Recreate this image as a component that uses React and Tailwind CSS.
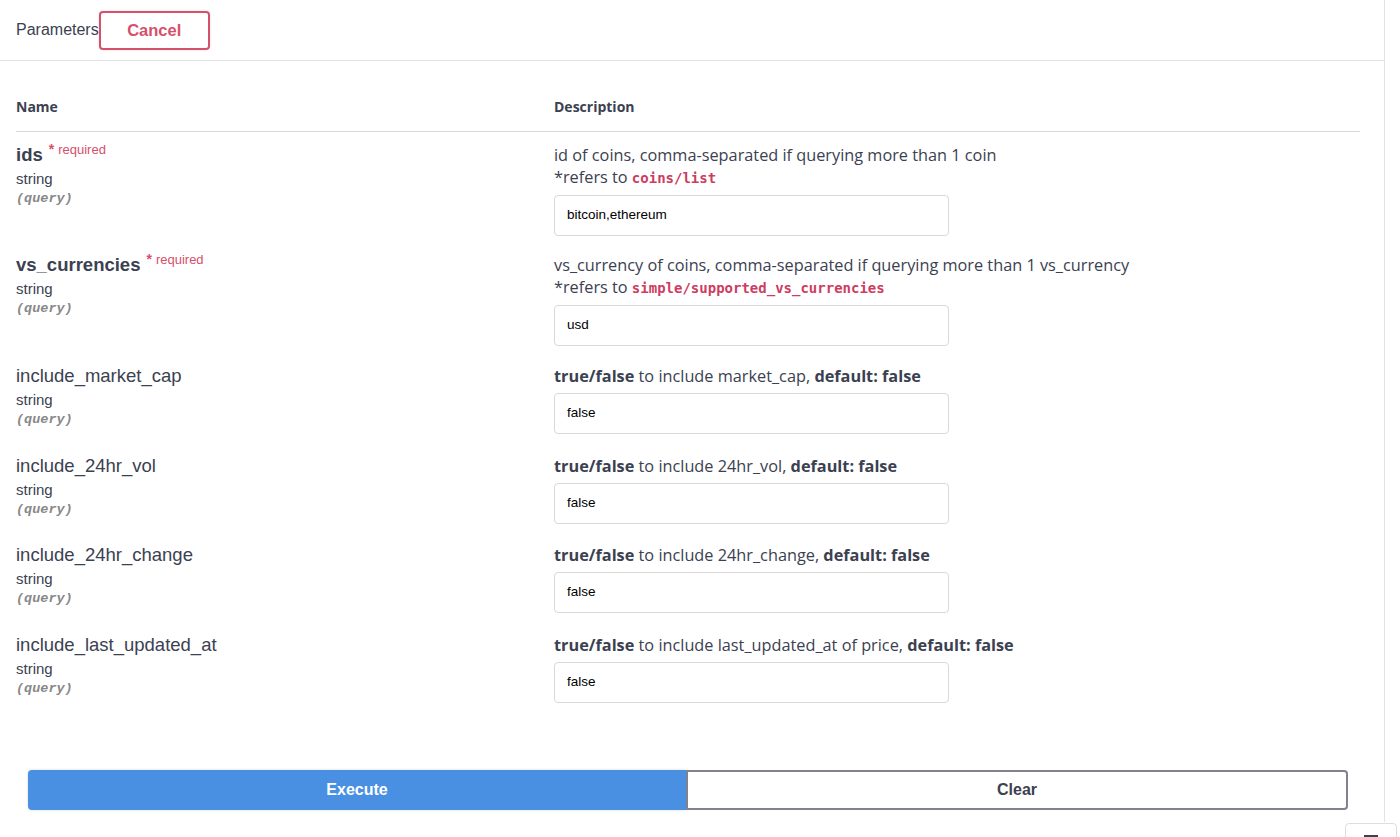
import React from 'react';

const sans = { fontFamily: '"Liberation Sans", Arial, sans-serif' };
const open = { fontFamily: '"Open Sans", "Liberation Sans", sans-serif' };
const mono = { fontFamily: '"Liberation Mono", "Courier New", monospace' };
const code = { fontFamily: '"DejaVu Sans Mono", "Liberation Mono", monospace' };

const params = [
  {
    name: 'ids',
    required: true,
    desc: <>id of coins, comma-separated if querying more than 1 coin<br />*refers to <Code>coins/list</Code></>,
    value: 'bitcoin,ethereum',
  },
  {
    name: 'vs_currencies',
    required: true,
    desc: <>vs_currency of coins, comma-separated if querying more than 1 vs_currency<br />*refers to <Code>simple/supported_vs_currencies</Code></>,
    value: 'usd',
  },
  { name: 'include_market_cap', desc: <><b>true/false</b> to include market_cap, <b>default: false</b></>, value: 'false' },
  { name: 'include_24hr_vol', desc: <><b>true/false</b> to include 24hr_vol, <b>default: false</b></>, value: 'false' },
  { name: 'include_24hr_change', desc: <><b>true/false</b> to include 24hr_change, <b>default: false</b></>, value: 'false' },
  { name: 'include_last_updated_at', desc: <><b>true/false</b> to include last_updated_at of price, <b>default: false</b></>, value: 'false' },
];

function Code({ children }) {
  return (
    <span className="text-[14px] font-bold text-[#cc3d60]" style={code}>{children}</span>
  );
}

const rowPad = ['pt-[12px] pb-[8px]', 'pt-[10px] pb-[9px]'];

function ParamRow({ p, index }) {
  return (
    <div className={`flex ${rowPad[index] || 'pt-[10px] pb-[10.5px]'}`}>
      <div className="w-[538px] shrink-0">
        <div className="flex items-start leading-[22px]">
          <span className={`text-[18.5px] text-[#3b4151] ${p.required ? 'font-bold' : ''}`} style={sans}>{p.name}</span>
          {p.required && (
            <span className="ml-[6px] text-[13px] leading-[14px] text-[#d6506b] -mt-[2px]" style={sans}>
              <span className="mr-[4px] text-[14px] font-bold">*</span>required
            </span>
          )}
        </div>
        <div className="mt-[2px] text-[15px] leading-[22px] text-[#3b4151]" style={sans}>string</div>
        <div className="text-[13.5px] leading-[18px] font-bold italic text-[#888]" style={mono}>(query)</div>
      </div>
      <div className="flex-1">
        <div className="text-[16.3px] leading-[22px] text-[#3b4151]" style={open}>{p.desc}</div>
        <div className="mt-[6px] w-[395px] h-[41px] rounded-[4px] border border-[#d9d9d9] px-[12px] flex items-center text-[13.5px] text-black" style={sans}>
          {p.value}
        </div>
      </div>
    </div>
  );
}

export default function App() {
  return (
    <div className="relative w-[1400px] h-[837px] overflow-hidden bg-white">
      <div className="w-[1385px] h-[822px] border-r border-[#e3e3e3]">
        {/* section header */}
        <div className="h-[61px] flex items-center pl-[16px] border-b border-[#e3e3e3]">
          <span className="text-[16px] text-[#3b4151]" style={sans}>Parameters</span>
          <button className="w-[111px] h-[39px] rounded-[4px] border-2 border-[#d6506b] text-[16.5px] font-bold text-[#d6506b] shadow-[0_0_3px_rgba(0,0,0,0.12)]" style={sans}>
            Cancel
          </button>
        </div>

        <div className="pl-[16px] pr-[24px]">
          <div className="flex pt-[37px] pb-[15px] border-b border-[#d8d9dc] text-[14px] leading-[18px] font-bold text-[#3b4151]" style={open}>
            <div className="w-[538px]">Name</div>
            <div>Description</div>
          </div>
          {params.map((p, i) => (
            <ParamRow key={p.name} p={p} index={i} />
          ))}
        </div>

        <div className="mt-[57px] ml-[28px] w-[1320px] flex h-[40px]">
          <button className="flex-1 rounded-l-[4px] bg-[#4990e2] text-white text-[16px] font-bold shadow-[0_0_3px_rgba(0,0,0,0.15)]" style={sans}>
            Execute
          </button>
          <button className="flex-1 rounded-r-[4px] border-2 border-[#80838f] text-[#3b4151] text-[16px] font-bold" style={sans}>
            Clear
          </button>
        </div>
      </div>

      <div className="absolute left-[1345px] top-[823px] w-[52px] h-[30px] rounded-t-[4px] border border-[#dedede] bg-white flex justify-center">
        <div className="mt-[11px] w-[14px] h-[3px] bg-[#3b4151]" />
      </div>
    </div>
  );
}
